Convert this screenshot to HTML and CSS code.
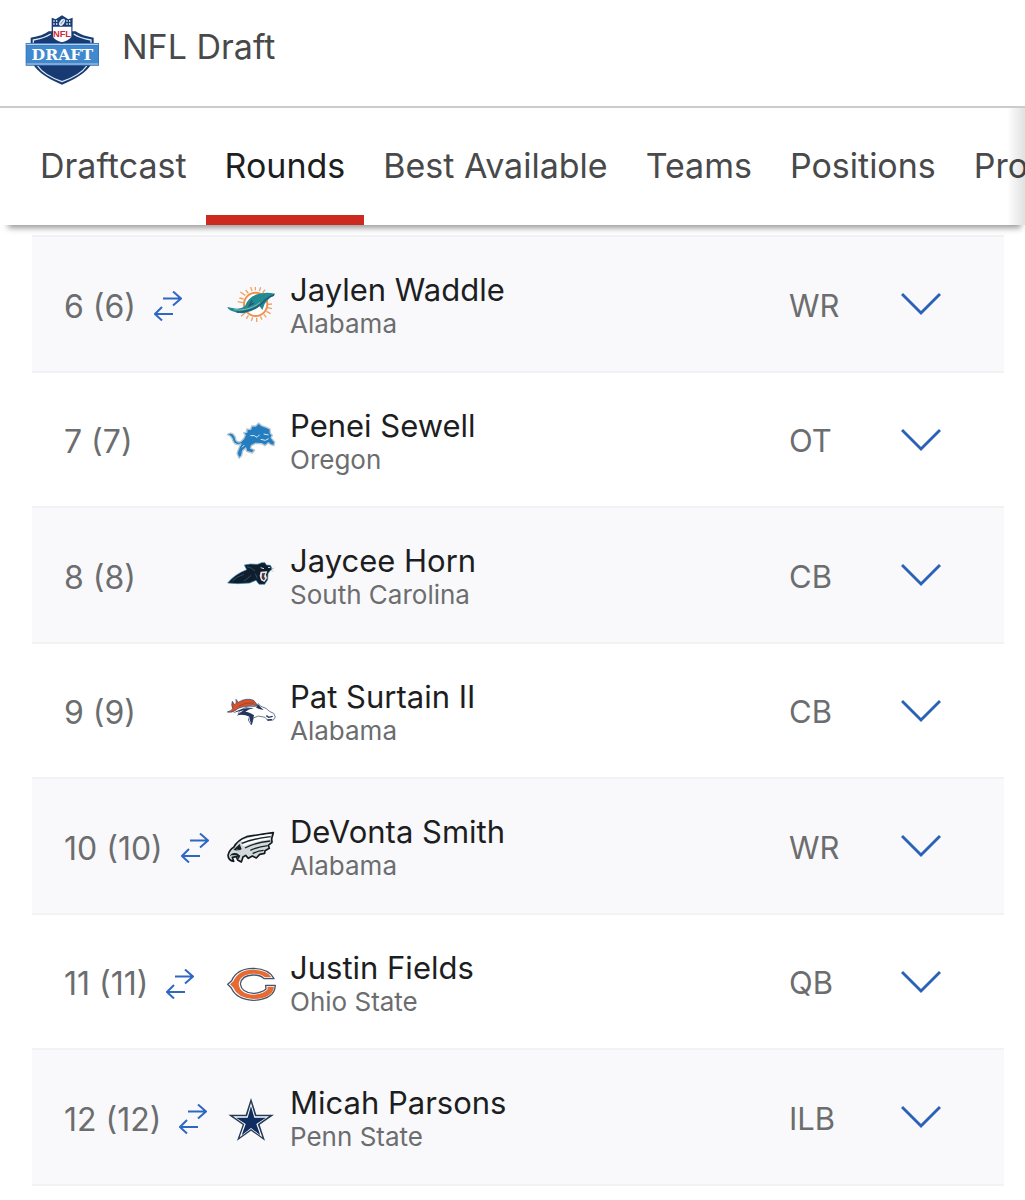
FILE: index.html
```
<!DOCTYPE html>
<html lang="en">
<head>
  <meta charset="utf-8">
  <meta name="viewport" content="width=device-width, initial-scale=1">
  <title>NFL Draft</title>
  <link rel="stylesheet" href="styles.css">
</head>
<body>
  <!-- shared icons -->
  <svg class="sprite" aria-hidden="true">
    <symbol id="trade" viewBox="0 0 28 30">
      <path d="M9 7.500H27M19 0.500L27 7.500L19 14.500M19 23H1M8 16L1 23L8 29.500"/>
    </symbol>
    <symbol id="chevron" viewBox="0 0 40 24">
      <path d="M1 2L20 21L39 2"/>
    </symbol>
  </svg>

  <header class="header">
    <svg class="brand" viewBox="42 15 234 216" aria-hidden="true">
      <path d="M62 98V83Q98 78 116 64H197Q216 78 251 83V98L244 163Q222 198 156 224Q91 198 69 163Z" fill="#173a72"/>
      <path d="M70 98V90Q105 84 122 72M243 98V90Q208 84 191 72M83 168Q101 195 156 215Q212 195 230 168" fill="none" stroke="#dce9f5" stroke-width="4"/>
      <path d="M47 99H267V167H47Z" fill="#2f6db5"/>
      <path d="M49 106H265V159H49Z" fill="#4189cf"/>
      <path d="M49 103H265M49 162H265" stroke="#d5e7f6" stroke-width="3"/>
      <path d="M125 23L137 28L156 16L175 28L188 23L187 82Q180 94 156 101Q132 94 125 82Z" fill="#183c75"/>
      <path d="M129 50H184V80Q177 91 156 97Q135 91 129 80Z" fill="#fff"/>
      <path d="M130 33H143M130 42H143M169 33H183M169 42H183" stroke="#fff" stroke-width="4" stroke-dasharray="4 4"/>
      <ellipse cx="156" cy="37" rx="7" ry="12" transform="rotate(35 156 37)" fill="#dfe8f1"/>
      <path d="M152 42L161 31" stroke="#345887" stroke-width="2"/>
      <text class="brand-nfl" x="156" y="82">NFL</text>
      <text class="brand-draft" x="157" y="150">DRAFT</text>
    </svg>
    <h1 class="title">NFL Draft</h1>
  </header>

  <nav class="nav">
    <div class="tabs">
      <a class="tab" href="#draftcast">Draftcast</a>
      <a class="tab active" href="#rounds" aria-current="page">Rounds</a>
      <a class="tab" href="#best">Best Available</a>
      <a class="tab" href="#teams">Teams</a>
      <a class="tab" href="#positions">Positions</a>
      <a class="tab" href="#projections">Projections</a>
    </div>
  </nav>

  <main class="rounds" id="rounds">
    <table class="picks">
      <colgroup>
        <col class="col-pick">
        <col class="col-team">
        <col>
        <col class="col-pos">
        <col class="col-more">
      </colgroup>
      <tbody>
        <tr>
          <td class="pick"><span>6 (6)</span><svg class="trade"><use href="#trade"/></svg></td>
          <td class="team">
            <!-- Dolphins -->
            <svg class="logo" viewBox="30 15 150 150">
              <g stroke="#f0a167" stroke-width="4">
                <path d="M118 39V49M104 39L108 51M134 40L130 51M89 48L97 58M147 47L140 57M73 54L88 64M70 72L83 75M65 83L81 86M75 127L88 116M91 135L97 124M106 141L110 130M122 144V131M138 137L133 127M151 130L143 121M164 119L151 112M168 104L155 101M168 90L156 91"/>
              </g>
              <circle cx="119" cy="91" r="35" fill="#fff" stroke="#ef9250" stroke-width="6"/>
              <path d="M34 99Q49 102 63 104Q78 104 87 96Q97 69 124 61Q146 53 178 59Q175 66 165 69Q151 81 146 90L139 108L131 97Q110 113 86 117Q64 119 50 112Q37 108 34 99Z" fill="#238a92"/>
              <path d="M54 107Q70 110 88 106Q116 100 132 85" fill="none" stroke="#a4d1d2" stroke-width="2"/>
              <path d="M62 114Q80 116 96 110Q119 104 135 91L150 76Q160 68 174 63M108 79L100 95L114 87" fill="none" stroke="#245676" stroke-width="4"/>
            </svg>
          </td>
          <td class="player"><div class="name">Jaylen Waddle</div><div class="school">Alabama</div></td>
          <td class="pos">WR</td>
          <td class="more"><button type="button" aria-label="Show Jaylen Waddle"><svg class="chevron"><use href="#chevron"/></svg></button></td>
        </tr>
        <tr>
          <td class="pick"><span>7 (7)</span></td>
          <td class="team">
            <!-- Lions -->
            <svg class="logo" viewBox="30 15 150 150">
              <path d="M34 74Q42 65 52 73Q59 80 60 91Q66 99 75 94Q84 88 88 76L83 69L93 66L92 57L104 58L107 48L119 48L128 39L137 47L151 52L162 57L163 70L169 76L165 83L176 96L174 107L164 104L157 98L147 107L137 101L119 100L106 107L104 115L116 120L109 129L92 124L89 114L80 122L77 137L69 145L63 130L70 111L75 102Q57 108 51 94Q48 78 34 74Z" fill="#247dbf" stroke="#b5c7d3" stroke-width="4" stroke-linejoin="round"/>
              <path d="M103 77Q116 74 123 82L131 74M134 88L148 91L158 86M143 72L158 75M78 112L85 105" fill="none" stroke="#d5eaf5" stroke-width="3"/>
            </svg>
          </td>
          <td class="player"><div class="name">Penei Sewell</div><div class="school">Oregon</div></td>
          <td class="pos">OT</td>
          <td class="more"><button type="button" aria-label="Show Penei Sewell"><svg class="chevron"><use href="#chevron"/></svg></button></td>
        </tr>
        <tr>
          <td class="pick"><span>8 (8)</span></td>
          <td class="team">
            <!-- Panthers -->
            <svg class="logo" viewBox="30 15 150 150">
              <path d="M35 114Q55 88 92 74L85 60L103 57L125 58L137 53L147 53L151 60L163 61L169 72L161 79L156 86L155 104L146 118L129 118L120 106L101 114L65 116Z" fill="#101d2c" stroke="#398bb2" stroke-width="2"/>
              <path d="M134 80L154 79L150 89L153 100L145 111L135 106L131 92Z" fill="#e3eaee"/>
              <path d="M138 85L148 84L144 94L148 102L142 106L137 99Z" fill="#5a3238"/>
              <path d="M93 65Q108 68 117 78M49 108Q62 94 84 88M84 108Q97 99 105 91M118 86L124 100" fill="none" stroke="#356982" stroke-width="2"/>
              <path d="M134 68L144 71M156 67L163 68" stroke="#c5d8e2" stroke-width="3"/>
              <path d="M165 72L176 69M163 77L174 79" stroke="#b5c7d2" stroke-width="2"/>
            </svg>
          </td>
          <td class="player"><div class="name">Jaycee Horn</div><div class="school">South Carolina</div></td>
          <td class="pos">CB</td>
          <td class="more"><button type="button" aria-label="Show Jaycee Horn"><svg class="chevron"><use href="#chevron"/></svg></button></td>
        </tr>
        <tr>
          <td class="pick"><span>9 (9)</span></td>
          <td class="team">
            <!-- Broncos -->
            <svg class="logo" viewBox="30 15 150 150">
              <path d="M66 99Q74 82 96 78L119 76L126 68L135 76Q153 81 160 91L173 97L178 108L172 117L155 118L147 109L127 105L112 111L106 132L97 117L102 102L87 98Z" fill="#fff" stroke="#6c7c90" stroke-width="3"/>
              <path d="M34 93Q46 90 50 83Q45 73 49 61L56 72Q63 68 60 55L67 64Q90 49 113 58L126 74Q107 70 93 76Q68 78 57 89Q47 96 34 93Z" fill="#d75228" stroke="#26416b" stroke-width="2"/>
              <path d="M50 97Q75 79 114 81Q97 84 88 92Q106 95 114 103L107 132L101 116L101 107Q79 97 62 104Q72 93 84 88Q66 91 50 97ZM119 79L128 71L134 79L143 87L129 84Z" fill="#22355e"/>
              <path d="M151 104L158 109L170 106M154 117L168 116" fill="none" stroke="#22355e" stroke-width="4"/>
              <path d="M69 75Q91 62 114 66" fill="none" stroke="#913a2c" stroke-width="2"/>
            </svg>
          </td>
          <td class="player"><div class="name">Pat Surtain II</div><div class="school">Alabama</div></td>
          <td class="pos">CB</td>
          <td class="more"><button type="button" aria-label="Show Pat Surtain II"><svg class="chevron"><use href="#chevron"/></svg></button></td>
        </tr>
        <tr>
          <td class="pick"><span>10 (10)</span><svg class="trade"><use href="#trade"/></svg></td>
          <td class="team">
            <!-- Eagles -->
            <svg class="logo" viewBox="165 15 150 150">
              <path d="M171 118Q175 101 188 94Q199 72 227 62Q256 57 307 50L302 68L303 79L292 88L295 97L282 104L281 112L266 115L256 126L244 120L232 127L224 118L216 123L211 138L200 132L196 122L184 124L188 136Q172 133 171 118Z" fill="#d3d9db" stroke="#111b20" stroke-width="5" stroke-linejoin="round"/>
              <path d="M212 76Q243 64 298 57M216 88Q248 73 297 67" fill="none" stroke="#fff" stroke-width="6"/>
              <path d="M212 82Q242 69 299 62M222 96Q251 80 298 75M238 103Q262 92 290 89M245 113Q260 104 278 103" fill="none" stroke="#172226" stroke-width="4"/>
              <path d="M187 101L206 84L212 99L203 106L192 103ZM176 122Q180 108 198 112L208 119L203 130L196 118L181 118Z" fill="#172226"/>
              <path d="M196 102L207 104" stroke="#b9cdd0" stroke-width="3"/>
            </svg>
          </td>
          <td class="player"><div class="name">DeVonta Smith</div><div class="school">Alabama</div></td>
          <td class="pos">WR</td>
          <td class="more"><button type="button" aria-label="Show DeVonta Smith"><svg class="chevron"><use href="#chevron"/></svg></button></td>
        </tr>
        <tr>
          <td class="pick"><span>11 (11)</span><svg class="trade"><use href="#trade"/></svg></td>
          <td class="team">
            <!-- Bears -->
            <svg class="logo" viewBox="195 15 150 150">
              <path d="M200 97L212 86Q227 50 276 49Q324 50 339 80H309Q300 69 276 69Q242 70 238 96Q242 122 277 124Q302 123 315 111L314 100H343Q341 143 276 145Q226 142 211 108Z" fill="#fff" stroke="#43556c" stroke-width="4" stroke-linejoin="round"/>
              <path d="M207 97L217 88Q231 54 276 53Q318 54 332 76H312Q302 65 276 65Q237 67 233 96Q237 127 277 128Q308 127 320 112L319 104H339Q335 139 276 141Q230 138 216 106Z" fill="#e66a31"/>
            </svg>
          </td>
          <td class="player"><div class="name">Justin Fields</div><div class="school">Ohio State</div></td>
          <td class="pos">QB</td>
          <td class="more"><button type="button" aria-label="Show Justin Fields"><svg class="chevron"><use href="#chevron"/></svg></button></td>
        </tr>
        <tr>
          <td class="pick"><span>12 (12)</span><svg class="trade"><use href="#trade"/></svg></td>
          <td class="team">
            <!-- Cowboys -->
            <svg class="logo" viewBox="165 15 150 150">
              <path d="M240 33L256 83H309L266 113L282 161L240 131L198 161L215 113L172 83H224Z" fill="#263954"/>
              <path d="M240 47L252 88H294L260 112L274 151L240 126L206 151L220 112L186 88H228Z" fill="#fff"/>
              <path d="M240 57L250 92H285L256 111L268 145L240 123L212 145L224 111L195 92H230Z" fill="#102d62"/>
            </svg>
          </td>
          <td class="player"><div class="name">Micah Parsons</div><div class="school">Penn State</div></td>
          <td class="pos">ILB</td>
          <td class="more"><button type="button" aria-label="Show Micah Parsons"><svg class="chevron"><use href="#chevron"/></svg></button></td>
        </tr>
      </tbody>
    </table>
  </main>
</body>
</html>
```

FILE: styles.css
```
* {
  box-sizing: border-box;
  }
body {
  margin: 0;
  background: #fff;
  color: #48494a;
  font-family: Inter, "Liberation Sans", sans-serif;
  font-size: 32px;
  overflow-x: hidden;
  }
svg {
  display: block;
  flex: none;
  }
.sprite {
  position: absolute;
  width: 0;
  height: 0;
  }

/* page header */
.header {
  display: flex;
  align-items: flex-start;
  gap: 20px;
  padding: 15px 24px 19px;
  border-bottom: 2px solid #cbcbcb;
  }
.brand {
  width: 78px;
  height: 72px;
  }
.brand-nfl, .brand-draft {
  font-weight: bold;
  text-anchor: middle;
  }
.brand-nfl {
  font-family: "Liberation Sans", sans-serif;
  font-size: 28px;
  fill: #d32938;
  }
.brand-draft {
  font-family: "DejaVu Serif", serif;
  font-size: 47px;
  fill: #fff;
  }
.title {
  margin: 0;
  font-size: 34px;
  font-weight: 400;
  line-height: 64px;
  }

/* tabs */
.nav {
  position: relative;
  z-index: 1;
  background: #fff;
  box-shadow: 2px 9px 6px -6px #999;
  }
.nav::after {
  content: "";
  position: absolute;
  top: 0;
  right: 0;
  bottom: 0;
  width: 18px;
  background: linear-gradient(to right, rgba(0, 0, 0, 0), rgba(0, 0, 0, 0.12));
  }
.tabs {
  display: flex;
  padding-left: 21px;
  overflow: hidden;
  }
.tab {
  flex: none;
  padding: 8px 19px 0;
  border-bottom: 10px solid transparent;
  color: #48494a;
  font-size: 34px;
  line-height: 99px;
  text-decoration: none;
  }
.tab.active {
  border-color: #cc2a1e;
  color: #1d1e1f;
  }

/* pick list */
.rounds {
  padding: 10px 21px 14px 32px;
  }
.picks {
  width: 100%;
  border-top: 2px solid #f1f2f3;
  border-spacing: 0;
  table-layout: fixed;
  }
.col-pick {
  width: 194px;
  }
.col-team {
  width: 64px;
  }
.col-pos {
  width: 112px;
  }
.col-more {
  width: 103px;
  }
.picks td {
  height: 135px;
  padding: 0;
  border-bottom: 2px solid #f1f2f3;
  white-space: nowrap;
  }
.picks tr:nth-child(odd) td {
  height: 136px;
  background: #f9f9fb;
  }
.picks .pick {
  padding: 2px 0 0 32px;
  color: #6c6d6f;
  font-size: 32px;
  }
.pick span {
  display: inline-block;
  margin-right: 18px;
  vertical-align: middle;
  }
.trade {
  display: inline-block;
  width: 28px;
  height: 30px;
  overflow: visible;
  vertical-align: middle;
  fill: none;
  stroke: #2f68c4;
  stroke-width: 2;
  }
.logo {
  width: 50px;
  height: 50px;
  }
.picks .player {
  padding-top: 6px;
  }
.name {
  color: #1d1e1f;
  font-size: 31px;
  line-height: 34px;
  }
.school {
  color: #6c6d6f;
  font-size: 26px;
  line-height: 34px;
  }
.picks .pos {
  padding-top: 2px;
  color: #6c6d6f;
  font-size: 31px;
  }
.more button {
  display: block;
  padding: 0;
  border: 0;
  background: none;
  cursor: pointer;
  }
.chevron {
  width: 40px;
  height: 24px;
  fill: none;
  stroke: #2b62b8;
  stroke-width: 3;
  }
```
